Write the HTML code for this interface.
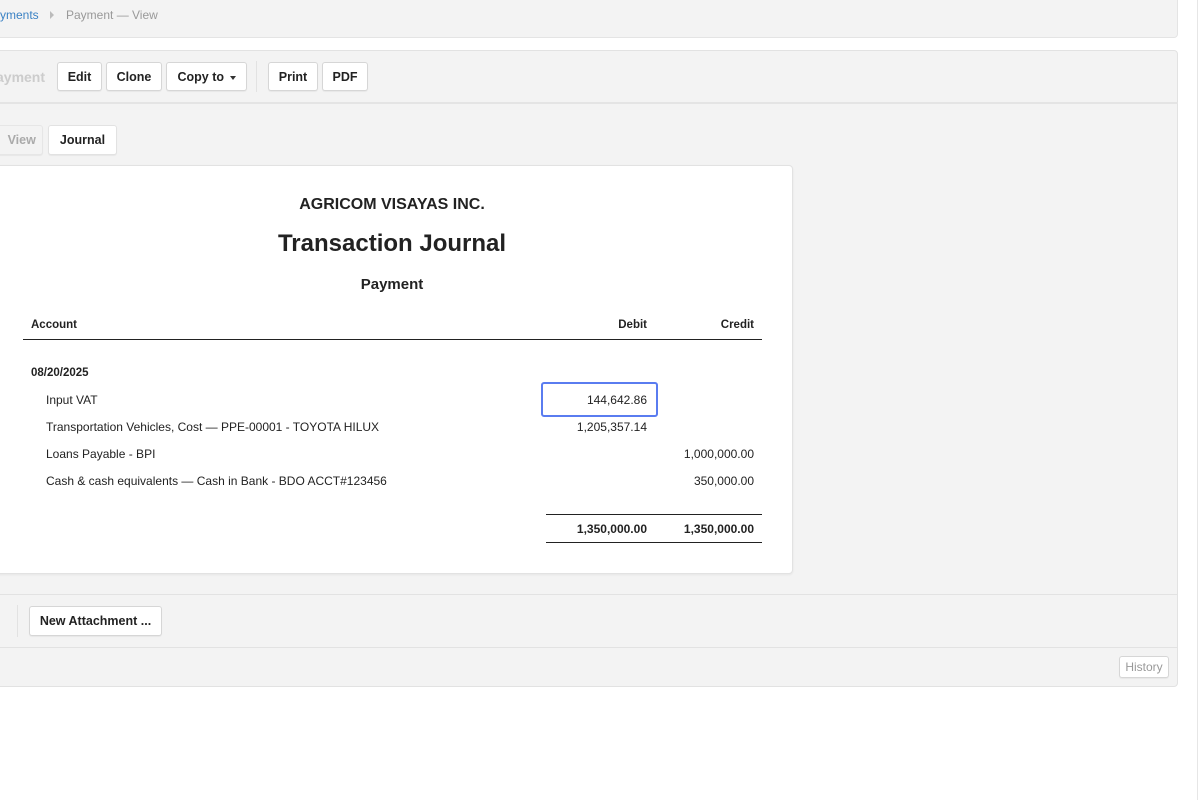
<!DOCTYPE html>
<html><head><style>
*{box-sizing:border-box;margin:0;padding:0}
body{width:1200px;height:800px;background:#fff;font-family:"Liberation Sans",Arial,sans-serif;position:relative;overflow:hidden;color:#222}
.a{position:absolute}
.btn{position:absolute;background:#fff;border:1px solid #d6d6d6;border-radius:3px;font-size:12.5px;font-weight:bold;color:#222;text-align:center;box-shadow:0 1px 1px rgba(0,0,0,.05)}
.t{position:absolute;font-size:12px;white-space:nowrap}
.r{text-align:right}
</style></head><body>
<div class="a" style="left:-5px;top:-5px;width:1183px;height:43px;background:#f3f3f3;border:1px solid #e4e4e4;border-radius:4px"></div>
<div class="t" style="left:0;top:8px;color:#3b82c4">yments</div>
<div class="a" style="left:50px;top:11px;width:0;height:0;border-left:4px solid #bbb;border-top:4px solid transparent;border-bottom:4px solid transparent"></div>
<div class="t" style="left:66px;top:8px;color:#999">Payment — View</div>

<div class="a" style="left:-5px;top:50px;width:1183px;height:637px;background:#f3f3f3;border:1px solid #e2e2e2;border-radius:4px"></div>
<div class="a" style="left:0;top:102px;width:1178px;height:2px;background:#e4e4e4"></div>
<div class="t" style="left:-4px;top:69px;font-size:14px;font-weight:bold;color:#ccc">ayment</div>
<div class="btn" style="left:57px;top:62px;width:45px;height:29px;line-height:28px">Edit</div>
<div class="btn" style="left:106px;top:62px;width:56px;height:29px;line-height:28px">Clone</div>
<div class="btn" style="left:166px;top:62px;width:81px;height:29px;line-height:28px">Copy to <span style="display:inline-block;border-top:4px solid #333;border-left:3.5px solid transparent;border-right:3.5px solid transparent;vertical-align:middle;margin-left:2px"></span></div>
<div class="a" style="left:256px;top:61px;width:1px;height:31px;background:#e2e2e2"></div>
<div class="btn" style="left:268px;top:62px;width:50px;height:29px;line-height:28px">Print</div>
<div class="btn" style="left:322px;top:62px;width:46px;height:29px;line-height:28px">PDF</div>

<div class="btn" style="left:-10px;top:125px;width:53px;height:30px;line-height:29px;background:#f3f3f3;color:#aaa;border-color:#e6e6e6">&nbsp;&nbsp;&nbsp;View</div>
<div class="btn" style="left:48px;top:125px;width:69px;height:30px;line-height:29px;border-color:#e2e2e2">Journal</div>

<div class="a" style="left:-10px;top:165px;width:803px;height:409px;background:#fff;border:1px solid #e2e2e2;border-radius:4px;box-shadow:0 1px 2px rgba(0,0,0,.06)"></div>
<div class="t" style="left:0;width:784px;text-align:center;top:196px;font-size:16px;font-weight:bold">AGRICOM VISAYAS INC.</div>
<div class="t" style="left:0;width:784px;text-align:center;top:230px;font-size:24px;font-weight:bold">Transaction Journal</div>
<div class="t" style="left:0;width:784px;text-align:center;top:276px;font-size:15px;font-weight:bold">Payment</div>
<div class="t" style="left:31px;top:319px;font-weight:bold;font-size:11.5px">Account</div>
<div class="t r" style="left:546px;width:101px;top:319px;font-weight:bold;font-size:11.5px">Debit</div>
<div class="t r" style="left:654px;width:100px;top:319px;font-weight:bold;font-size:11.5px">Credit</div>
<div class="a" style="left:23px;top:339px;width:739px;height:1px;background:#222"></div>
<div class="t" style="left:31px;top:367px;font-weight:bold;font-size:11.5px">08/20/2025</div>
<div class="t" style="left:46px;top:393px">Input VAT</div>
<div class="a" style="left:541px;top:382px;width:117px;height:35px;border:2.5px solid #5a7cf0;border-radius:3px"></div>
<div class="t r" style="left:546px;width:101px;top:393px">144,642.86</div>
<div class="t" style="left:46px;top:420px">Transportation Vehicles, Cost — PPE-00001 - TOYOTA HILUX</div>
<div class="t r" style="left:546px;width:101px;top:420px">1,205,357.14</div>
<div class="t" style="left:46px;top:447px">Loans Payable - BPI</div>
<div class="t r" style="left:654px;width:100px;top:447px">1,000,000.00</div>
<div class="t" style="left:46px;top:474px">Cash &amp; cash equivalents — Cash in Bank - BDO ACCT#123456</div>
<div class="t r" style="left:654px;width:100px;top:474px">350,000.00</div>
<div class="a" style="left:546px;top:514px;width:216px;height:1px;background:#222"></div>
<div class="t r" style="left:546px;width:101px;top:522px;font-weight:bold">1,350,000.00</div>
<div class="t r" style="left:654px;width:100px;top:522px;font-weight:bold">1,350,000.00</div>
<div class="a" style="left:546px;top:542px;width:216px;height:1px;background:#222"></div>

<div class="a" style="left:0;top:594px;width:1178px;height:1px;background:#e2e2e2"></div>
<div class="a" style="left:17px;top:605px;width:1px;height:32px;background:#e2e2e2"></div>
<div class="btn" style="left:29px;top:606px;width:133px;height:30px;line-height:29px">New Attachment ...</div>
<div class="a" style="left:0;top:647px;width:1178px;height:1px;background:#e2e2e2"></div>
<div class="btn" style="left:1119px;top:656px;width:50px;height:22px;line-height:20px;font-weight:normal;font-size:12px;color:#999">History</div>
<div class="a" style="left:1197px;top:0;width:1px;height:800px;background:#e6e6e6"></div>
</body></html>
